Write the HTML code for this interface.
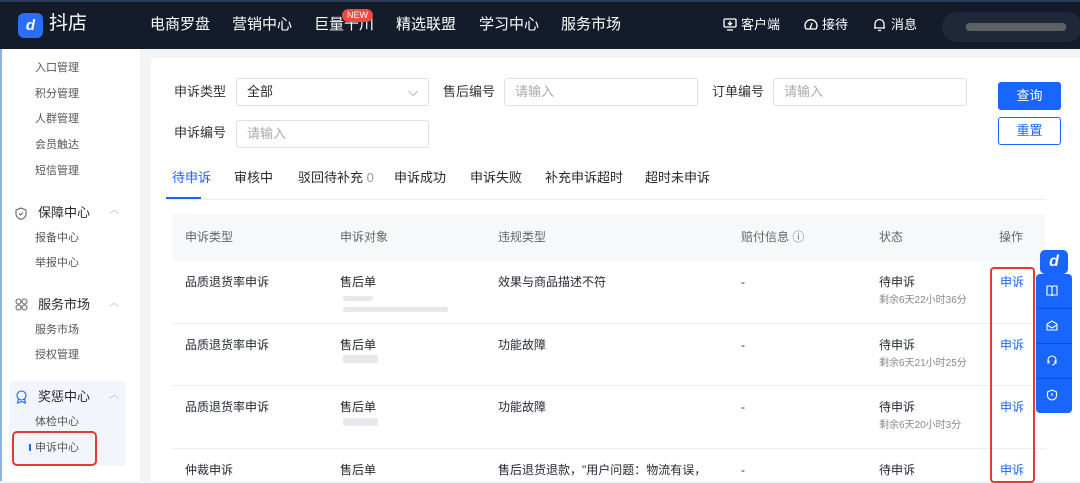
<!DOCTYPE html><html><head><meta charset="utf-8"><style>
*{margin:0;padding:0;box-sizing:border-box}
body{width:1080px;height:481px;overflow:hidden;font-family:"Liberation Sans","Noto Sans CJK SC",sans-serif;background:#f3f4f6;position:relative;color:#252931;font-size:13px;line-height:1.15}
.a{position:absolute}
.nav{left:0;top:0;width:1080px;height:49px;background:#141c2c;border-top:2px solid #2b3b55}
.nav span{position:absolute;top:14px;color:#fff;font-size:15px}
.side{left:0;top:49px;width:140px;height:432px;background:#fff;border-left:2px solid #8fb3de}
.side .i{position:absolute;left:33px;font-size:11px;color:#555}
.side .g{position:absolute;left:36px;font-size:13px;color:#252931}
.card{left:151px;top:58px;width:929px;height:423px;background:#fff}
.lbl{position:absolute;font-size:13px;color:#333}
.in{position:absolute;height:28px;border:1px solid #dcdfe4;border-radius:3px;color:#aaa;font-size:13px;padding:6px 10px}
.th{position:absolute;top:231px;font-size:12px;color:#666}
.td{position:absolute;font-size:12px;color:#252931}
.sm{position:absolute;font-size:10px;color:#888}
.blue{color:#1966ff}
.bl{position:absolute;background:#d5d8dd;border-radius:2px;height:5px;opacity:.6}
svg{position:absolute}
</style></head><body>
<div class="a nav">
<div class="a" style="left:18px;top:11px;width:25px;height:25px;background:#2a6ef7;border-radius:6px;color:#fff;font-weight:bold;font-size:15px;text-align:center;line-height:25px;font-style:italic">d</div>
<span style="left:49px;font-size:19px;top:11px">抖店</span>
<span style="left:150px">电商罗盘</span><span style="left:232px">营销中心</span><span style="left:314px">巨量千川</span><span style="left:396px">精选联盟</span><span style="left:479px">学习中心</span><span style="left:561px">服务市场</span>
<div class="a" style="left:342px;top:7px;width:31px;height:13px;background:#f04a45;border-radius:7px;color:#fff;font-size:9px;text-align:center;line-height:13px">NEW</div>
<svg style="left:723px;top:16px" width="14" height="13" viewBox="0 0 14 13" fill="none" stroke="#fff" stroke-width="1.3"><rect x="1" y="1" width="12" height="8" rx="1"/><path d="M4 12h6M7 3v4M5 5l2 2 2-2"/></svg>
<span style="left:741px;font-size:13px;top:16px">客户端</span>
<svg style="left:804px;top:16px" width="14" height="14" viewBox="0 0 14 14" fill="none" stroke="#fff" stroke-width="1.3"><path d="M2 11A6 6 0 1 1 12 11Z M6 11l2-6"/></svg>
<span style="left:822px;font-size:13px;top:16px">接待</span>
<svg style="left:873px;top:16px" width="13" height="14" viewBox="0 0 13 14" fill="none" stroke="#fff" stroke-width="1.3"><path d="M2 10V6a4.5 4.5 0 0 1 9 0v4h1H1M5 12.5h3"/></svg>
<span style="left:891px;font-size:13px;top:16px">消息</span>
<div class="a" style="left:942px;top:10px;width:140px;height:30px;background:#1f2839;border-radius:15px"></div>
<div class="a" style="left:966px;top:21px;width:100px;height:8px;background:#777;border-radius:3px;opacity:.7"></div>
</div>
<div class="a side">
<div class="i" style="top:13px">入口管理</div><div class="i" style="top:39px">积分管理</div><div class="i" style="top:64px">人群管理</div><div class="i" style="top:90px">会员触达</div><div class="i" style="top:116px">短信管理</div>
<svg style="left:13px;top:158px" width="12" height="13" viewBox="0 0 12 13" fill="none" stroke="#666" stroke-width="1.1"><path d="M6 1l5 2v4c0 3-2.5 4.5-5 5.5C3.5 11.5 1 10 1 7V3z M4 6.5l1.5 1.5L8 5.5"/></svg>
<div class="g" style="top:157px">保障中心</div><div class="a" style="left:107px;top:156px;color:#bbb;font-size:10px">︿</div>
<div class="i" style="top:183px">报备中心</div><div class="i" style="top:208px">举报中心</div>
<svg style="left:13px;top:249px" width="13" height="13" viewBox="0 0 13 13" fill="none" stroke="#666" stroke-width="1.1"><circle cx="3.5" cy="3.5" r="2.5"/><circle cx="9.5" cy="3.5" r="2.5"/><circle cx="3.5" cy="9.5" r="2.5"/><circle cx="9.5" cy="9.5" r="2.5"/></svg>
<div class="g" style="top:249px">服务市场</div><div class="a" style="left:107px;top:249px;color:#bbb;font-size:10px">︿</div>
<div class="i" style="top:275px">服务市场</div><div class="i" style="top:300px">授权管理</div>
<div class="a" style="left:7px;top:332px;width:117px;height:85px;background:#f2f5fb;border-radius:4px"></div>
<svg style="left:13px;top:341px" width="13" height="14" viewBox="0 0 13 14" fill="none" stroke="#1966ff" stroke-width="1.1"><circle cx="6.5" cy="5.5" r="4.5"/><path d="M3.5 9l-1 4 4-1.5 4 1.5-1-4"/></svg>
<div class="g blue" style="top:341px">奖惩中心</div><div class="a" style="left:107px;top:341px;color:#bbb;font-size:10px">︿</div>
<div class="i" style="top:367px">体检中心</div>
<div class="a" style="left:10px;top:382px;width:85px;height:35px;border:2px solid #e53935;border-radius:5px"></div>
<div class="i blue" style="top:393px;left:33px">申诉中心</div><div class="a" style="left:27px;top:395px;width:2px;height:7px;background:#1966ff"></div>
</div>
<div class="a card"></div>
<div class="lbl" style="left:174px;top:85px">申诉类型</div>
<div class="in" style="left:236px;top:78px;width:193px;color:#252931">全部<span style="float:right;color:#888">⌵</span></div>
<div class="lbl" style="left:443px;top:85px">售后编号</div><div class="in" style="left:504px;top:78px;width:194px">请输入</div>
<div class="lbl" style="left:712px;top:85px">订单编号</div><div class="in" style="left:773px;top:78px;width:194px">请输入</div>
<div class="lbl" style="left:174px;top:126px">申诉编号</div><div class="in" style="left:236px;top:120px;width:193px">请输入</div>
<div class="a" style="left:998px;top:82px;width:63px;height:28px;background:#1966ff;border-radius:3px;color:#fff;text-align:center;line-height:28px">查询</div>
<div class="a" style="left:998px;top:117px;width:63px;height:28px;border:1px solid #1966ff;border-radius:3px;color:#1966ff;text-align:center;line-height:26px">重置</div>
<div class="td blue" style="left:172px;top:171px;font-size:13px">待申诉</div><div class="a" style="left:166px;top:197px;width:35px;height:3px;background:#1966ff"></div>
<div class="td" style="left:234px;top:171px;font-size:13px">审核中</div><div class="td" style="left:298px;top:171px;font-size:13px">驳回待补充 <span style="color:#999">0</span></div>
<div class="td" style="left:394px;top:171px;font-size:13px">申诉成功</div><div class="td" style="left:470px;top:171px;font-size:13px">申诉失败</div><div class="td" style="left:545px;top:171px;font-size:13px">补充申诉超时</div><div class="td" style="left:645px;top:171px;font-size:13px">超时未申诉</div>
<div class="a" style="left:166px;top:199px;width:880px;height:1px;background:#eee"></div>
<div class="a" style="left:172px;top:214px;width:873px;height:47px;background:#f7f8fa"></div>
<div class="th" style="left:185px">申诉类型</div><div class="th" style="left:340px">申诉对象</div><div class="th" style="left:498px">违规类型</div><div class="th" style="left:741px">赔付信息 ⓘ</div><div class="th" style="left:879px">状态</div><div class="th" style="left:999px">操作</div>
<div class="a" style="left:172px;top:323px;width:873px;height:1px;background:#eee"></div>
<div class="a" style="left:172px;top:385px;width:873px;height:1px;background:#eee"></div>
<div class="a" style="left:172px;top:448px;width:873px;height:1px;background:#eee"></div>
<div class="td" style="left:185px;top:276px">品质退货率申诉</div><div class="td" style="left:340px;top:276px">售后单</div><div class="bl" style="left:343px;top:296px;width:30px"></div><div class="bl" style="left:343px;top:307px;width:105px"></div><div class="td" style="left:498px;top:276px">效果与商品描述不符</div><div class="td" style="left:741px;top:276px">-</div><div class="td" style="left:879px;top:276px">待申诉</div><div class="sm" style="left:879px;top:295px">剩余6天22小时36分</div><div class="td blue" style="left:1000px;top:276px">申诉</div>
<div class="td" style="left:185px;top:339px">品质退货率申诉</div><div class="td" style="left:340px;top:339px">售后单</div><div class="bl" style="left:343px;top:355px;width:35px;height:8px"></div><div class="td" style="left:498px;top:339px">功能故障</div><div class="td" style="left:741px;top:339px">-</div><div class="td" style="left:879px;top:339px">待申诉</div><div class="sm" style="left:879px;top:358px">剩余6天21小时25分</div><div class="td blue" style="left:1000px;top:339px">申诉</div>
<div class="td" style="left:185px;top:401px">品质退货率申诉</div><div class="td" style="left:340px;top:401px">售后单</div><div class="bl" style="left:343px;top:418px;width:35px;height:8px"></div><div class="td" style="left:498px;top:401px">功能故障</div><div class="td" style="left:741px;top:401px">-</div><div class="td" style="left:879px;top:401px">待申诉</div><div class="sm" style="left:879px;top:420px">剩余6天20小时3分</div><div class="td blue" style="left:1000px;top:401px">申诉</div>
<div class="td" style="left:185px;top:464px">仲裁申诉</div><div class="td" style="left:340px;top:464px">售后单</div><div class="td" style="left:498px;top:464px">售后退货退款，"用户问题：物流有误，</div><div class="td" style="left:741px;top:464px">-</div><div class="td" style="left:879px;top:464px">待申诉</div><div class="td blue" style="left:1000px;top:464px">申诉</div>
<div class="a" style="left:990px;top:267px;width:45px;height:216px;border:2px solid #e53935;border-radius:4px"></div>
<div class="a" style="left:1040px;top:250px;width:28px;height:24px;background:#1966ff;border-radius:5px;color:#fff;font-weight:bold;font-style:italic;text-align:center;line-height:24px;font-size:16px">d</div>
<div class="a" style="left:1036px;top:274px;width:36px;height:139px;background:#1966ff;border-radius:4px"></div>
<div class="a" style="left:1036px;top:308px;width:36px;height:1px;background:#0e4fd6"></div><div class="a" style="left:1036px;top:343px;width:36px;height:1px;background:#0e4fd6"></div><div class="a" style="left:1036px;top:378px;width:36px;height:1px;background:#0e4fd6"></div>
<svg style="left:1046px;top:285px" width="12" height="11" viewBox="0 0 12 11" fill="none" stroke="#fff" stroke-width="1.1"><path d="M1 1h4l1 1 1-1h4v9H7l-1 1-1-1H1zM6 2v8"/></svg>
<svg style="left:1046px;top:320px" width="12" height="11" viewBox="0 0 12 11" fill="none" stroke="#fff" stroke-width="1.1"><path d="M1 4l5-3 5 3v6H1zM1 5l5 3 5-3"/></svg>
<svg style="left:1046px;top:354px" width="12" height="12" viewBox="0 0 12 12" fill="none" stroke="#fff" stroke-width="1.1"><path d="M2 8V6a4 4 0 0 1 8 0v2M2 7h1v2H2zM9 7h1v2H9zM9 9.5Q8 11 6 11"/></svg>
<svg style="left:1046px;top:389px" width="12" height="12" viewBox="0 0 12 12" fill="none" stroke="#fff" stroke-width="1.1"><path d="M6 1l4.5 2v3.5c0 2.5-2 4-4.5 4.5C3.5 10.5 1.5 9 1.5 6.5V3zM6 4v3"/></svg>
</body></html>
